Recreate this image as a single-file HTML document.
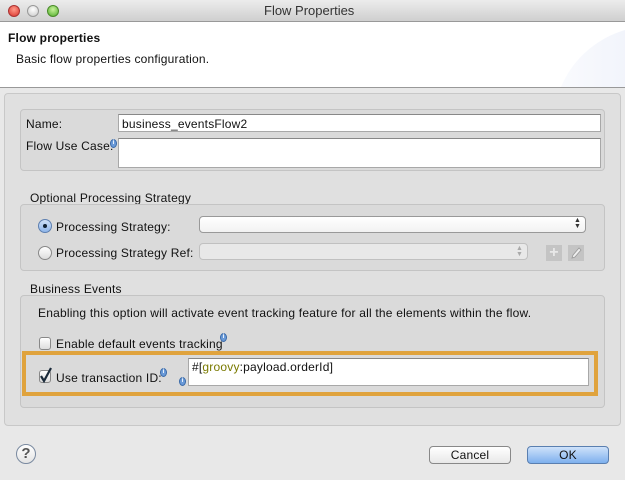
<!DOCTYPE html>
<html><head><style>
*{margin:0;padding:0;box-sizing:border-box}
body{width:625px;height:480px;overflow:hidden;background:#e8e8e8;font-family:"Liberation Sans",sans-serif;font-size:12px;color:#111;position:relative;letter-spacing:0.2px}
.a{position:absolute}
.t{position:absolute;white-space:nowrap;line-height:14px}
.in{position:absolute;background:#fff;border:1px solid #a8a8a8;border-top-color:#888}
.grp{position:absolute;background:#dadada;border:1px solid #c4c4c4;border-radius:4px}
.info{position:absolute;width:7px;height:9px;border-radius:50%;background:#6a9ad8;border:1px solid #3a6aa8;font-size:6px;color:#fff;line-height:7px;text-align:center;font-weight:bold;letter-spacing:0}
.sel{position:absolute;background:linear-gradient(#fff,#f2f2f2);border:1px solid #999;border-radius:4px}
.btn{position:absolute;border:1px solid #888;border-radius:4px;text-align:center;line-height:16px;font-size:12px}
</style></head><body>
<div class="a" style="left:0;top:0;width:625px;height:22px;background:linear-gradient(#ececec,#cfcfcf);border-bottom:1px solid #999"></div>
<div class="a" style="left:8px;top:5px;width:12px;height:12px;border-radius:50%;background:radial-gradient(circle at 50% 35%,#ff9a8a,#d9322a);border:1px solid #a33"></div>
<div class="a" style="left:27px;top:5px;width:12px;height:12px;border-radius:50%;background:radial-gradient(circle at 50% 35%,#fff,#c8c8c8);border:1px solid #999"></div>
<div class="a" style="left:47px;top:5px;width:12px;height:12px;border-radius:50%;background:radial-gradient(circle at 50% 35%,#c8f29a,#4fae2a);border:1px solid #4a8a2a"></div>
<div class="t" style="left:264px;top:4px;font-size:13px;color:#333;letter-spacing:0">Flow Properties</div>
<div class="a" style="left:0;top:22px;width:625px;height:66px;background:#fff;border-bottom:1px solid #999;overflow:hidden">
<div class="a" style="left:553px;top:4px;width:200px;height:200px;border-radius:50%;background:linear-gradient(90deg,#fafbfe,#e4e9f6)"></div>
</div>
<div class="t" style="left:8px;top:31px;font-weight:bold;font-size:12px">Flow properties</div>
<div class="t" style="left:16px;top:52px">Basic flow properties configuration.</div>

<div class="a" style="left:4px;top:93px;width:617px;height:333px;background:#e0e0e0;border:1px solid #c8c8c8;border-radius:4px"></div>

<div class="grp" style="left:20px;top:109px;width:585px;height:62px"></div>
<div class="t" style="left:26px;top:117px">Name:</div>
<div class="in" style="left:118px;top:114px;width:483px;height:18px"></div>
<div class="t" style="left:122px;top:117px">business_eventsFlow2</div>
<div class="t" style="left:26px;top:139px">Flow Use Case:</div>
<div class="info" style="left:110px;top:139px">i</div>
<div class="in" style="left:118px;top:138px;width:483px;height:30px"></div>

<div class="t" style="left:30px;top:191px">Optional Processing Strategy</div>
<div class="grp" style="left:20px;top:204px;width:585px;height:67px"></div>
<div class="a" style="left:38px;top:219px;width:14px;height:14px;border-radius:50%;background:linear-gradient(#cfe0f7,#8fb6ea);border:1px solid #5d7fb0"></div>
<div class="a" style="left:43px;top:224px;width:4px;height:4px;border-radius:50%;background:#123"></div>
<div class="t" style="left:56px;top:220px">Processing Strategy:</div>
<div class="sel" style="left:199px;top:216px;width:387px;height:17px"></div>
<div class="t" style="left:574px;top:218px;font-size:7px;line-height:6px;color:#333">▲<br>▼</div>
<div class="a" style="left:38px;top:246px;width:14px;height:14px;border-radius:50%;background:linear-gradient(#fff,#ddd);border:1px solid #888"></div>
<div class="t" style="left:56px;top:246px">Processing Strategy Ref:</div>
<div class="sel" style="left:199px;top:243px;width:329px;height:17px;border-color:#c0c0c0;background:#e8e8e8"></div>
<div class="t" style="left:516px;top:246px;font-size:7px;line-height:6px;color:#aaa">▲<br>▼</div>
<div class="a" style="left:546px;top:245px;width:16px;height:16px;background:#c4c4c4;color:#e8e8e8;font-size:16px;line-height:15px;text-align:center;font-weight:bold">+</div>
<div class="a" style="left:568px;top:245px;width:16px;height:16px;background:#c4c4c4"></div>
<svg class="a" style="left:568px;top:245px" width="16" height="16"><path d="M4 13 L5 10 L11 3 L13 5 L7 12 Z" fill="#eee" stroke="#999" stroke-width="0.8"/></svg>

<div class="t" style="left:30px;top:282px">Business Events</div>
<div class="grp" style="left:20px;top:295px;width:585px;height:113px"></div>
<div class="t" style="left:38px;top:306px">Enabling this option will activate event tracking feature for all the elements within the flow.</div>
<div class="a" style="left:39px;top:337px;width:12px;height:13px;border-radius:3px;background:linear-gradient(#fff,#ddd);border:1px solid #888"></div>
<div class="t" style="left:56px;top:337px">Enable default events tracking</div>
<div class="info" style="left:220px;top:333px">i</div>
<div class="a" style="left:22px;top:351px;width:576px;height:45px;border:4px solid #e0a33d"></div>
<div class="a" style="left:39px;top:370px;width:12px;height:13px;border-radius:3px;background:linear-gradient(#fff,#ddd);border:1px solid #888"></div>
<svg class="a" style="left:38px;top:366px" width="16" height="18"><path d="M3 10 L6 15 L13 2" fill="none" stroke="#1a2a3a" stroke-width="2.2"/></svg>
<div class="t" style="left:56px;top:371px">Use transaction ID:</div>
<div class="info" style="left:160px;top:368px">i</div>
<div class="info" style="left:179px;top:377px">i</div>
<div class="in" style="left:188px;top:358px;width:401px;height:28px"></div>
<div class="t" style="left:192px;top:360px">#[<span style="color:#7a7a00">groovy</span>:payload.orderId]</div>

<div class="a" style="left:16px;top:444px;width:20px;height:20px;border-radius:50%;border:1.5px solid #7a8aa0;background:linear-gradient(#fff,#e4e4e4);text-align:center;font-size:15px;line-height:18px;color:#555;font-weight:bold">?</div>
<div class="btn" style="left:429px;top:446px;width:82px;height:18px;background:linear-gradient(#fff,#e8e8e8)">Cancel</div>
<div class="btn" style="left:527px;top:446px;width:82px;height:18px;background:linear-gradient(#cfe2fa,#7eb0ee);border-color:#5a7fb0">OK</div>
</body></html>
